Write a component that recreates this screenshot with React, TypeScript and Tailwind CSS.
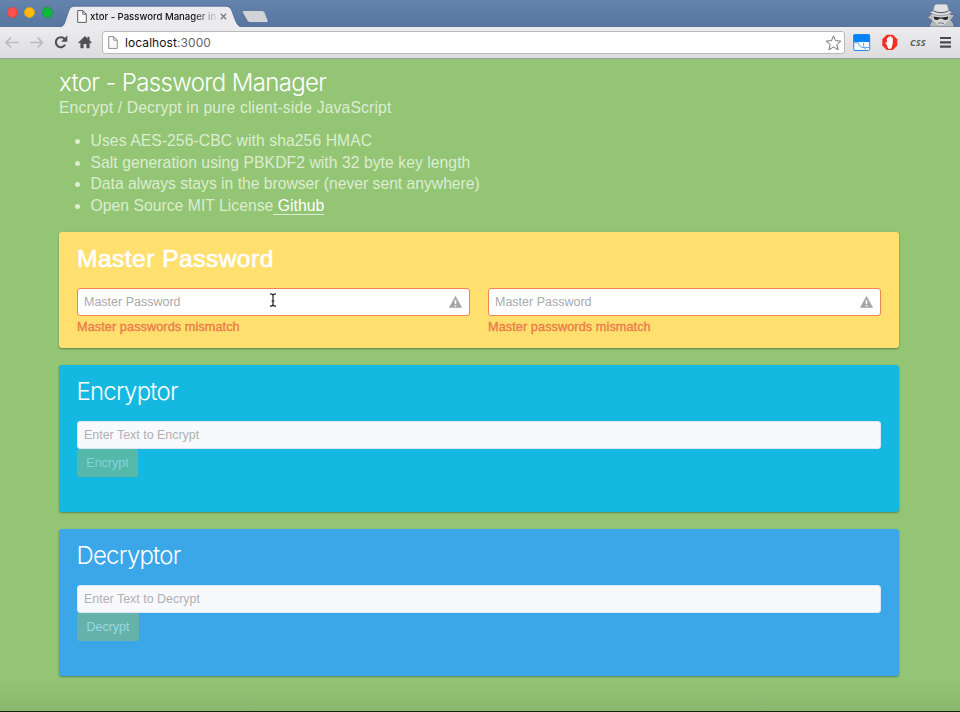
import React from "react";

const body = "font-['Liberation_Sans',Arial,sans-serif]";
const light = "font-['Inter','Liberation_Sans',sans-serif] font-light";

function PageIcon({ color }: { color: string }) {
  return (
    <svg width="10" height="13" viewBox="0 0 10 13" className="shrink-0" fill="#fafafa" stroke={color} strokeWidth="1">
      <path d="M.7.6h5.1l3.5 3.6v8.2H.7z" />
      <path d="M5.8.6v3.6h3.5" fill="none" />
    </svg>
  );
}

function TabStrip() {
  return (
    <div className="relative flex h-[27px] items-center bg-[#5d7ca5] bg-linear-to-b from-[#6484ad] to-[#56769f]">
      <div className="flex gap-[6.500px] pl-[6.500px] pb-[2px]">
        <span className="size-[11px] rounded-full border border-[#d8473f] bg-[#ff5149]" />
        <span className="size-[11px] rounded-full border border-[#dba01a] bg-[#ffb90f]" />
        <span className="size-[11px] rounded-full border border-[#0ea030] bg-[#0dbb3c]" />
      </div>
      <svg className="absolute left-[58px] top-[5px]" width="214" height="23" viewBox="0 0 214 23">
        <path d="M0 22.5C5 22 6 20 7 17L11 5Q12.5 1.500 16 1.500H168Q172 1.500 173.500 5L178 17Q180 22 185 22.500Z" fill="#ebebee" />
        <path d="M2 22C5 21 6 20 7 17L11 5Q12.500 1 16 1H168Q172 1 173.500 5L178 17Q180 21 183 22" fill="none" stroke="#47638b" strokeWidth=".7" />
        <path d="M185.500 5.500H204Q206 5.500 207 7.500L210 15.500Q210.500 17.500 208.500 17.500H192Q190 17.500 189 15.500L184.500 7.500Q184 5.500 185.500 5.500Z" fill="#d0d3d7" stroke="#4e698f" strokeWidth=".7" />
      </svg>
      <div className="absolute left-[77px] top-[10px] flex h-[13px] w-[152px] items-center">
        <PageIcon color="#5d6064" />
        <span className="ml-[3px] mt-[1px] w-[126px] overflow-hidden whitespace-nowrap bg-linear-to-r from-[#111] from-82% to-[#11111120] bg-clip-text font-['Inter',sans-serif] text-[9.6px] font-medium tracking-[-0.02px] text-transparent">
          xtor - Password Manager in
        </span>
        <svg className="ml-[4px] shrink-0" width="7" height="7" viewBox="0 0 7 7" stroke="#777b80" strokeWidth="1.300">
          <path d="M.8.8l5.400 5.400M6.200.8L.8 6.200" />
        </svg>
      </div>
      <svg className="absolute left-[926px] top-[3px]" width="30" height="24" viewBox="0 0 30 24">
        <path d="M3 24Q4 20 6 18L1.500 14.500L5 11H24L29 12L25 17Q28 20 28.500 24Z" fill="#b4b7bb" stroke="#4c5c73" strokeWidth=".7" />
        <path d="M6 11Q14 16 24 11L23 17L18 22H12L7 17Z" fill="#d6d7d9" />
        <path d="M7 8L8.500 2Q10 .3 15 1.300Q20 .3 21.500 2L23 8Q26 8.500 25.500 9.500Q22 12.500 15 12.500T4 9.500Q4 8.500 7 8Z" fill="#dfe0e1" stroke="#77808d" strokeWidth=".5" />
        <path d="M7.500 8Q15 11.500 22.500 8" fill="none" stroke="#505358" strokeWidth="1" />
        <path d="M7.500 13.500L14 14.600H16L22.500 13.500L21.500 16.500Q18.500 17.800 16.500 15.700H13.500Q11 17.800 8.500 16.500Z" fill="#252629" />
        <path d="M12 20.500Q15 19 18 20.500" stroke="#73777c" fill="none" />
      </svg>
    </div>
  );
}

function Toolbar() {
  return (
    <div className="flex h-[32px] items-center border-b border-[#9ca09c] bg-linear-to-b from-[#ececee] to-[#dddddf]">
      <svg width="102" height="31" viewBox="0 0 102 31" className="shrink-0" fill="none">
        <path d="M18.500 15.500H6M11 10.500l-5 5 5 5M30 15.500h12.500M37.500 10.500l5 5-5 5" stroke="#b9bbbd" strokeWidth="1.700" />
        <path d="M64.700 12A5 5 0 1 0 65.100 17.800" stroke="#505154" strokeWidth="2.100" />
        <path d="M67.300 8.500v6.200h-6.200z" fill="#505154" />
        <path d="M78.300 15.500L85 9l2.500 2.400V9.700h2v3.600l2.200 2.200-.9 1-1.200-1v5.700h-3.200v-4.200h-2.800v4.200h-3.200v-5.700l-1.200 1z" fill="#505154" />
      </svg>
      <div className="flex h-[23px] w-[743px] items-center rounded-[3px] border border-[#b9babd] bg-white pl-[5px] pr-[3px]">
        <PageIcon color="#8a8d90" />
        <span className="ml-[7px] grow font-['Inter',sans-serif] text-[12px] tracking-[0.080px] text-[#111]">
          localhost<span className="text-[#666]">:3000</span>
        </span>
        <svg width="16" height="16" viewBox="0 0 16 16" fill="#fff" stroke="#747679" strokeWidth="1" strokeLinejoin="round">
          <path d="M8.500 .8l2 4.900 5.300.4-4 3.500 1.300 5.200-4.600-2.800-4.600 2.800 1.300-5.200-4-3.500 5.300-.4z" />
        </svg>
      </div>
      <svg width="115" height="31" viewBox="0 0 115 31" className="shrink-0">
        <rect x="8.700" y="7.500" width="16" height="16" rx="1.200" fill="#f5f8fc" stroke="#268cec" />
        <path d="M8.500 7.500h16.300v7.500H8.500z" fill="#0783fa" />
        <path d="M9 15.800h4.500Q14.500 20.500 18 20.500H24M18.500 15.800v3q.5 2 2 3.700" fill="none" stroke="#68abed" />
        <path d="M41.700 7.800h6.200l4.400 4.400v6.400l-4.400 4.400h-6.200l-4.400-4.400v-6.400z" fill="#f32f23" />
        <path d="M42 18.500l-1.800-3.200 1.700.4V11.500q.8-.8 1.400 0V9.900q.8-.8 1.500 0V9.500q.8-.8 1.500 0v1.300q.8-.6 1.500 0v5l-.8 3.700-1 2.200h-2.800z" fill="#fff" />
        <text x="65" y="18.500" fontFamily="Noto Sans" fontWeight="700" fontStyle="italic" fontSize="9" textLength="15.500" fill="#5d5f62">CSS</text>
        <path d="M95 11h11M95 15.300h11M95 19.600h11" stroke="#494a4d" strokeWidth="2.200" />
      </svg>
    </div>
  );
}

function Intro() {
  return (
    <header className="h-[173px] pt-[10px] text-[#dcedd0]">
      <h1 className={`${light} h-[29px] whitespace-nowrap text-[24px] leading-[28px] tracking-[-0.65px] text-white`}>
        xtor - Password Manager
      </h1>
      <p className="h-[20px] whitespace-nowrap text-[15.700px] leading-[20px] tracking-[0.150px]">Encrypt / Decrypt in pure client-side JavaScript</p>
      <ul className="mt-[12px] list-disc pl-[31.500px] text-[15.700px] leading-[21.600px]">
        <li className="tracking-[0.080px]">Uses AES-256-CBC with sha256 HMAC</li>
        <li className="tracking-[0.060px]">Salt generation using PBKDF2 with 32 byte key length</li>
        <li className="tracking-[-0.010px]">Data always stays in the browser (never sent anywhere)</li>
        <li className="tracking-[0.040px]">
          Open Source MIT License
          <a className="inline-block h-[20px] whitespace-pre border-b border-[#dcedd0] leading-[21px] text-white"> Github</a>
        </li>
      </ul>
    </header>
  );
}

function PasswordField() {
  return (
    <div className="flex-1">
      <div className="flex h-[28px] items-center rounded-[3px] border border-[#ee8453] bg-white pl-[6px] pr-[7px]">
        <input
          placeholder="Master Password"
          className="min-w-0 grow bg-transparent pt-[1px] text-[12.500px] outline-none placeholder:text-[#aaa]"
        />
        <svg width="13" height="12" viewBox="0 0 13 12">
          <path d="M6.500.3L12.700 11.500H.3z" fill="#a3a6a6" stroke="#a3a6a6" strokeWidth=".5" strokeLinejoin="round" />
          <path d="M6.500 4v4M6.500 9v1.500" stroke="#fff" strokeWidth="1.500" />
        </svg>
      </div>
      <p className="mt-[2px] h-[18px] whitespace-nowrap text-[12.700px] leading-[18px] tracking-[0.080px] text-[#e9804d] [-webkit-text-stroke:0.4px_currentColor]">
        Master passwords mismatch
      </p>
    </div>
  );
}

function CryptCard({ title, action, cardClass, buttonClass }: { title: string; action: string; cardClass: string; buttonClass: string }) {
  return (
    <section className={`h-[147px] rounded-[3px] px-[18px] pt-[11px] shadow-[0_1px_2px_rgba(0,0,0,0.35)] ${cardClass}`}>
      <h2 className={`${light} -ml-[0.500px] mb-[15px] h-[30px] text-[24px] leading-[32px] tracking-[-0.8px] text-white`}>{title}</h2>
      <input
        placeholder={`Enter Text to ${action}`}
        className="block h-[28px] w-full rounded-[3px] border border-[#dce8f3] bg-[#f8f9fd] px-[6px] text-[12.450px] outline-none placeholder:text-[#b0b0b2]"
      />
      <button className={`block h-[28px] rounded-[2px] text-[12.500px] ${buttonClass}`}>{action}</button>
    </section>
  );
}

export default function App() {
  return (
    <div className={`${body} relative flex h-[712px] w-[960px] flex-col overflow-hidden bg-[#93c575]`}>
      <TabStrip />
      <Toolbar />
      <main className="grow bg-linear-to-b from-[#93c575] from-95% to-[#8ab86d] pl-[59px] pr-[61px]">
        <Intro />
        <div className="flex flex-col gap-[17px]">
          <section className="h-[116px] rounded-[3px] bg-[#ffdf6e] px-[18px] pt-[11px] shadow-[0_1px_2px_rgba(0,0,0,0.35)]">
            <h2 className="mb-[15px] h-[30px] text-[24.500px] leading-[31px] tracking-[0.5px] text-white [-webkit-text-stroke:0.7px_currentColor]">Master Password</h2>
            <div className="flex gap-[18px]">
              <PasswordField />
              <PasswordField />
            </div>
          </section>
          <CryptCard title="Encryptor" action="Encrypt" cardClass="bg-[#14b8e0]" buttonClass="w-[61px] bg-[#55b8a8] text-[#82d3d8]" />
          <CryptCard title="Decryptor" action="Decrypt" cardClass="bg-[#3ba6e8]" buttonClass="w-[62px] bg-[#65b2ab] text-[#9bd7e5]" />
        </div>
      </main>
      <div className="h-[1px] bg-[#14220f]" />
      <svg className="absolute left-[269px] top-[293px]" width="8" height="14" viewBox="0 0 8 14" fill="none" stroke="#222" strokeWidth="1.200">
        <path d="M1 .8Q4 .8 4 2.500V11.500Q4 13.200 1 13.200M7 .8Q4 .8 4 2.500M4 11.500Q4 13.200 7 13.200M2.500 8h3" />
      </svg>
    </div>
  );
}
